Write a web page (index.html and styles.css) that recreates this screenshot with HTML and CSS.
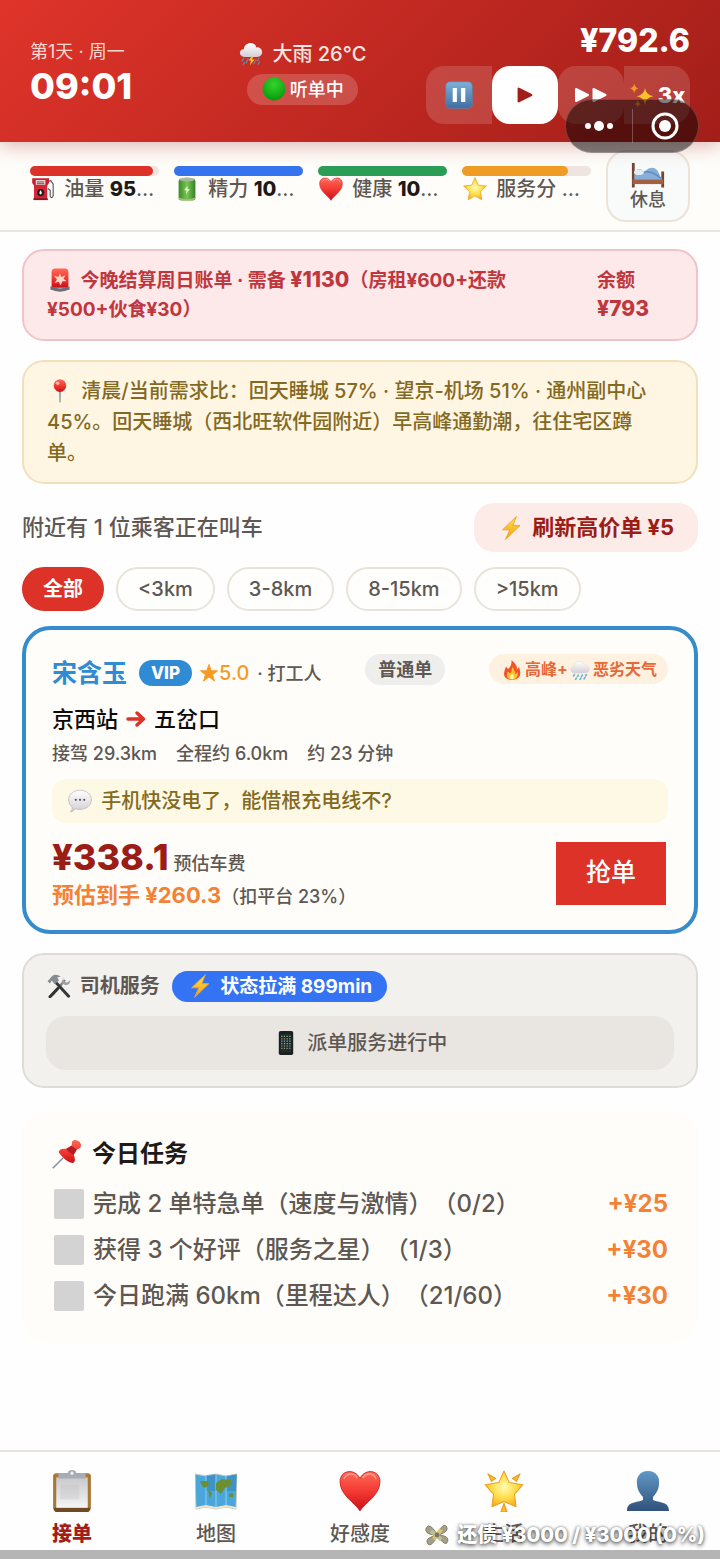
FILE: index.html
```html
<!DOCTYPE html>
<html lang="zh-CN">
<head>
<meta charset="utf-8">
<meta name="viewport" content="width=device-width, initial-scale=1">
<title>接单</title>
<link rel="stylesheet" href="styles.css">
</head>
<body>
<svg class="sprite" aria-hidden="true">
  <defs>
    <linearGradient id="g-red" x1="0" y1="0" x2="0" y2="1"><stop offset="0" stop-color="#ff6a58"/><stop offset=".5" stop-color="#f33a32"/><stop offset="1" stop-color="#c90f17"/></linearGradient>
    <radialGradient id="g-gold" cx=".5" cy=".45" r=".6"><stop offset="0" stop-color="#fffcb4"/><stop offset=".55" stop-color="#ffdc45"/><stop offset="1" stop-color="#f4a51c"/></radialGradient>
    <linearGradient id="g-cloud" x1="0" y1="0" x2="0" y2="1"><stop offset="0" stop-color="#fff"/><stop offset="1" stop-color="#d5cdd6"/></linearGradient>
    <linearGradient id="g-blue" x1="0" y1="0" x2="0" y2="1"><stop offset="0" stop-color="#7eb0d8"/><stop offset="1" stop-color="#3f6fa3"/></linearGradient>
    <linearGradient id="g-person" x1="0" y1="0" x2="0" y2="1"><stop offset="0" stop-color="#6098c6"/><stop offset="1" stop-color="#31527c"/></linearGradient>
    <linearGradient id="g-green" x1="0" y1="0" x2="1" y2="0"><stop offset="0" stop-color="#3b8a2c"/><stop offset=".5" stop-color="#7cc552"/><stop offset="1" stop-color="#35802a"/></linearGradient>
    <radialGradient id="g-dot" cx=".5" cy=".3" r=".7"><stop offset="0" stop-color="#35d52c"/><stop offset="1" stop-color="#069a0b"/></radialGradient>
    <linearGradient id="g-paper" x1="0" y1="0" x2="0" y2="1"><stop offset="0" stop-color="#c9c9cb"/><stop offset="1" stop-color="#f5f5f6"/></linearGradient>
    <linearGradient id="g-bolt" x1="0" y1="0" x2="0" y2="1"><stop offset="0" stop-color="#ffe34a"/><stop offset="1" stop-color="#f59d12"/></linearGradient>
  </defs>
  <symbol id="heart" viewBox="0 0 40 40"><path d="M20 39C15 31 1 24 1 11 1 0 15-2 20 8 25-2 39 0 39 11 39 24 25 31 20 39Z" fill="url(#g-red)" stroke="#c51d1d" stroke-width=".8"/><path d="M5 8C8 2 15 3 17 7M23 7C27 2 33 3 35 8" fill="none" stroke="#ffb0a2" stroke-width="1.5" stroke-linecap="round" opacity=".7"/></symbol>
  <symbol id="star" viewBox="0 0 40 40"><path d="M20 1 25.5 13.5 39 15 29 24.500 31.500 38 20 31.500 8.500 38 11 24.500 1 15 14.500 13.500Z" fill="url(#g-gold)" stroke="#e8a322" stroke-width="1.200" stroke-linejoin="round"/></symbol>
  <symbol id="glow-star" viewBox="0 0 40 40"><path d="M20 1 25 12 38 14 30 23 31.500 35 20 30 8.500 35 10 23 2 14 15 12Z" fill="url(#g-gold)" stroke="#e8a322" stroke-linejoin="round"/><path d="M5 4 12 8 8 11ZM35 4 28 8 32 11ZM17 40 20 32 23 40Z" fill="#f7bb2b" stroke="#e69b1c"/></symbol>
  <symbol id="flat-star" viewBox="0 0 40 40"><path d="M20 1 25 15H39L28 24 32 38 20 29 8 38 12 24 1 15H15Z" fill="#f59a23" stroke="#f59a23" stroke-width="2" stroke-linejoin="round"/></symbol>
  <symbol id="storm" viewBox="0 0 40 40"><path d="M10 25C-1 25-1 12 8 12 9 0 26-2 29 9 41 8 42 25 30 25Z" fill="url(#g-cloud)"/><path d="M8 27 5 32M15 28 12 35M33 27 31 31M28 30 25 36M9 34 7 38M34 33 32 37" stroke="#6f7c96" stroke-width="2.500" stroke-linecap="round"/><path d="M21 24 16 31H20L18 39 26 29H22L24 24Z" fill="#ffbd22"/></symbol>
  <symbol id="rain" viewBox="0 0 40 40"><path d="M10 26C-1 26-1 13 8 13 9 1 26-1 29 10 41 9 42 26 30 26Z" fill="url(#g-cloud)" stroke="#d9d7dc"/><path d="M9 29 7 32M17 30 15 33M25 30 23 33M33 29 31 32M13 36 11 39M22 36 20 39M30 35 28 38" stroke="#63b5da" stroke-width="3" stroke-linecap="round"/></symbol>
  <symbol id="green-dot" viewBox="0 0 40 40"><circle cx="20" cy="20" r="19" fill="url(#g-dot)"/></symbol>
  <symbol id="pause" viewBox="0 0 40 40"><rect x="1" y="1" width="38" height="38" rx="6" fill="url(#g-blue)" stroke="#5685b0"/><path d="M11 10h6v20h-6ZM23 10h6v20h-6Z" fill="#fff"/></symbol>
  <symbol id="play" viewBox="0 0 40 40"><path d="M6 6 34 20 6 34Z" fill="currentColor" stroke="currentColor" stroke-width="5" stroke-linejoin="round"/></symbol>
  <symbol id="forward" viewBox="0 0 68 40"><path d="M4 8 28 20 4 32ZM39 8 63 20 39 32Z" fill="currentColor" stroke="currentColor" stroke-width="4" stroke-linejoin="round"/></symbol>
  <symbol id="sparkle" viewBox="0 0 40 40"><path d="M25 8Q26 20 39 22 26 24 25 37 24 24 11 22 24 20 25 8Z" fill="#fbc12d"/><path d="M7 1Q8 8 14 9 8 10 7 17 6 10 0 9 6 8 7 1ZM13 29Q14 34 18 35 14 36 13 40 12 36 8 35 12 34 13 29Z" fill="#f49b29"/></symbol>
  <symbol id="fuel" viewBox="0 0 40 40"><path d="M28 8 33 6 37 12V31Q35 37 32 32V22L28 19" fill="none" stroke="#685d60" stroke-width="2"/><path d="M5 8H27V38H5Z" fill="#d42837"/><path d="M2 2H30V10L27 14H5L2 10Z" fill="#c9202f"/><path d="M8 5H24V13H8Z" fill="#eadadb"/><path d="M10 8H22M10 11H22" stroke="#a55d65" stroke-width="2"/><circle cx="16" cy="26" r="6" fill="#241d20"/><path d="M16 22Q20 28 16 29 12 28 16 22Z" fill="#fff"/><path d="M4 37H28" stroke="#851522" stroke-width="3"/></symbol>
  <symbol id="battery" viewBox="0 0 40 40"><rect x="6" y="3" width="28" height="36" rx="4" fill="url(#g-green)"/><ellipse cx="20" cy="4" rx="13" ry="3" fill="#a6b9a1"/><path d="M6 34Q20 40 34 34V37Q20 42 6 37Z" fill="#a8bb7a"/><path d="M21 14 15 22H19L18 29 25 20H21Z" fill="#d5f2bf"/></symbol>
  <symbol id="bed" viewBox="0 0 48 40"><path d="M3 3V38M45 15V38" stroke="#77452f" stroke-width="4"/><path d="M2 26H46V33H2Z" fill="#a26141"/><path d="M5 26V14Q14 8 18 16 29 5 37 13L44 26Z" fill="#87aed8"/><ellipse cx="11" cy="16" rx="7" ry="4" fill="#e4edf7"/><path d="M18 16Q30 13 42 25" fill="none" stroke="#5f8bc0" stroke-width="2"/></symbol>
  <symbol id="siren" viewBox="0 0 40 40"><path d="M6 33V7Q6 1 12 1H28Q34 1 34 7V33Z" fill="url(#g-red)"/><path d="M20 9 22 15 29 12 26 18 31 22 24 22 21 29 18 23 11 25 15 19 10 13 17 15Z" fill="#ffd5ca"/><path d="M4 31Q20 37 36 31V36Q20 43 4 36Z" fill="#697078"/></symbol>
  <symbol id="pin" viewBox="0 0 40 40"><path d="M18.500 18H21.500L21 39H19Z" fill="#8995a0"/><circle cx="20" cy="11" r="10.500" fill="url(#g-red)"/><circle cx="16" cy="7" r="3" fill="#ffaca3"/></symbol>
  <symbol id="bolt" viewBox="0 0 40 40"><path d="M29 1 6 23H18L11 39 35 16H23Z" fill="url(#g-bolt)" stroke="#eaa526" stroke-width="1.500" stroke-linejoin="round"/></symbol>
  <symbol id="fire" viewBox="0 0 40 40"><path d="M19 0Q33 12 29 20L34 14Q43 39 20 40-4 39 8 13L12 18Q20 12 19 0Z" fill="#f4512a"/><path d="M20 13Q28 25 27 29L31 24Q34 38 20 39 5 38 12 23L16 27Q21 21 20 13Z" fill="#ffc22c"/><path d="M20 27Q29 37 20 39 12 37 20 27Z" fill="#fff4a8"/></symbol>
  <symbol id="arrow" viewBox="0 0 40 40"><path d="M4 20H34M22 8 35 20 22 32" fill="none" stroke="#dc3228" stroke-width="7" stroke-linecap="round" stroke-linejoin="round"/></symbol>
  <symbol id="bubble" viewBox="0 0 40 40"><path d="M20 2C31 2 39 9 39 18S31 34 20 34Q15 34 12 33 9 38 4 38 8 34 7 30 1 26 1 18C1 9 9 2 20 2Z" fill="url(#g-cloud)" stroke="#aaa9ae"/><g fill="#555"><circle cx="13" cy="18" r="1.800"/><circle cx="20" cy="18" r="1.800"/><circle cx="27" cy="18" r="1.800"/></g></symbol>
  <symbol id="tools" viewBox="0 0 40 40"><path d="M30 10 9 35" stroke="#7f8588" stroke-width="4"/><path d="M27 5 30 1Q24 8 29 13 34 16 39 10 38 20 29 18L25 15Z" fill="#9ba1a4"/><path d="M13 12 36 37" stroke="#34373a" stroke-width="5" stroke-linecap="round"/><path d="M1 12 9 3Q15-1 23 4L17 6 20 11 13 17 8 11 5 16Z" fill="#858c90"/><path d="M18 24 5 38" stroke="#303234" stroke-width="5" stroke-linecap="round"/></symbol>
  <symbol id="phone" viewBox="0 0 40 40"><rect x="8" y="0" width="24" height="40" rx="3" fill="#1c2022"/><path d="M11 5H29V35H11Z" fill="#1d2e2c"/><g fill="none" stroke-width="2" stroke-dasharray="2 2.500"><path d="M12 9H29M12 21H29" stroke="#88b4a0"/><path d="M12 13H29M12 29H29" stroke="#b4915f"/><path d="M12 17H29M12 25H29" stroke="#9aa7b5"/></g></symbol>
  <symbol id="pushpin" viewBox="0 0 40 40"><path d="M15 25 1 39" stroke="#7d8e9c" stroke-width="2"/><path d="M27 3Q31-1 37 4 41 10 36 13L33 14 29 21Q33 31 27 32 19 31 9 18 9 12 19 13L26 9Z" fill="url(#g-red)"/><path d="M19 13Q22 19 29 21L33 14 26 9Z" fill="#b51c25"/></symbol>
  <symbol id="clipboard" viewBox="0 0 40 40"><rect x="2" y="3" width="36" height="36" rx="3" fill="#a97837"/><path d="M3 36H37V38Q37 40 34 40H6Q3 40 3 38Z" fill="#6e4a25"/><path d="M5 7H35V36H5Z" fill="url(#g-paper)"/><path d="M9 14H27V28H9Z" fill="#bfc0c2" opacity=".35"/><path d="M7 3H16Q16 0 20 0T24 3H33V8H7Z" fill="#a7adb5"/><circle cx="20" cy="3" r="1.500" fill="#eef2f4"/></symbol>
  <symbol id="map" viewBox="0 0 42 40"><path d="M0 3 11 5 21 3 31 5 42 3 41 38 31 36 21 38 11 36 1 38Z" fill="#4ba6dc" stroke="#c6c9ba"/><path d="M11 4 21 3V20H11ZM31 5 42 3 41 20H31Z" fill="#2777a9" opacity=".4"/><path d="M11 5V36M31 5V36M21 3V38" stroke="#8bd0f0" stroke-width="1"/><path d="M5 10 13 10 14 14 10 17 7 15ZM13 19 17 22 15 28ZM21 12 27 8 36 9 37 14 30 17 26 23 21 19ZM34 23 38 22 38 26 34 26Z" fill="#6d8f34"/><path d="M1 36 11 34 21 36 31 34 41 36V38L31 36 21 38 11 36 1 38Z" fill="#eee6d0"/></symbol>
  <symbol id="person" viewBox="0 0 42 40"><path d="M21 0C29 0 33 6 32 13 32 19 28 24 26 26V29C32 32 42 30 42 40H0C0 30 10 32 16 29V26C14 24 10 19 10 13 9 6 13 0 21 0Z" fill="url(#g-person)"/></symbol>
  <symbol id="money" viewBox="0 0 40 40"><path d="M20 18Q7-2 2 8T18 21Q-1 25 4 34T21 22Q35 41 38 31T23 20Q41 14 36 6T20 18Z" fill="#a49f85" stroke="#666351"/><path d="M12 11 29 25 25 30 8 16Z" fill="#bac09f"/><path d="M12 25 24 9 30 13 17 29Z" fill="#d9c66e"/><circle cx="20" cy="20" r="4" fill="#787761"/></symbol>
</svg>

<div class="app">
  <header class="topbar">
    <div class="clock"><span class="day">第1天 · 周一</span><strong class="time">09:01</strong></div>
    <div class="weather">
      <span class="weather-now"><svg class="emoji"><use href="#storm"/></svg> 大雨 26°C</span>
      <span class="status"><svg class="emoji"><use href="#green-dot"/></svg>听单中</span>
    </div>
    <div class="wallet">
      <strong class="balance">¥792.6</strong>
      <div class="speed">
        <button type="button" class="speed-btn first" aria-label="暂停"><svg class="ico28"><use href="#pause"/></svg></button>
        <button type="button" class="speed-btn active" aria-label="播放"><svg class="ico18"><use href="#play"/></svg></button>
        <button type="button" class="speed-btn" aria-label="快进"><svg class="ico-forward"><use href="#forward"/></svg></button>
        <button type="button" class="speed-btn last"><svg class="emoji"><use href="#sparkle"/></svg>3x</button>
      </div>
    </div>
    <div class="capsule">
      <button type="button" aria-label="更多"><svg class="ico-dots" viewBox="0 0 28 12" fill="#fff"><circle cx="3" cy="6" r="3"/><circle cx="14" cy="6" r="5"/><circle cx="25" cy="6" r="3"/></svg></button>
      <button type="button" aria-label="关闭"><svg class="ico28" viewBox="0 0 28 28"><circle cx="14" cy="14" r="12" fill="none" stroke="#fff" stroke-width="3"/><circle cx="14" cy="14" r="6" fill="#fff"/></svg></button>
    </div>
  </header>

  <section class="stats">
    <div class="stat"><div class="track"><div class="fill red" style="width:95%"></div></div><div class="stat-label"><svg class="emoji"><use href="#fuel"/></svg> 油量 <b>95</b>…</div></div>
    <div class="stat"><div class="track"><div class="fill blue" style="width:100%"></div></div><div class="stat-label"><svg class="emoji"><use href="#battery"/></svg> 精力 <b>10</b>…</div></div>
    <div class="stat"><div class="track"><div class="fill green" style="width:100%"></div></div><div class="stat-label"><svg class="emoji"><use href="#heart"/></svg> 健康 <b>10</b>…</div></div>
    <div class="stat"><div class="track"><div class="fill orange" style="width:82%"></div></div><div class="stat-label"><svg class="emoji"><use href="#star"/></svg> 服务分 …</div></div>
    <button type="button" class="rest"><svg class="ico-bed"><use href="#bed"/></svg>休息</button>
  </section>

  <main class="content">
    <section class="notice bill">
      <p><svg class="emoji"><use href="#siren"/></svg> 今晚结算周日账单 · 需备 <b>¥1130</b>（房租¥600+还款¥500+伙食¥30）</p>
      <p class="remain">余额<br><b>¥793</b></p>
    </section>
    <section class="notice demand">
      <p><svg class="emoji"><use href="#pin"/></svg> 清晨/当前需求比：回天睡城 57% · 望京-机场 51% · 通州副中心 45%。回天睡城（西北旺软件园附近）早高峰通勤潮，往住宅区蹲单。</p>
    </section>

    <div class="nearby"><span>附近有 1 位乘客正在叫车</span><button type="button" class="refresh"><svg class="emoji"><use href="#bolt"/></svg> 刷新高价单 ¥5</button></div>

    <div class="chips">
      <button type="button" class="chip on">全部</button>
      <button type="button" class="chip">&lt;3km</button>
      <button type="button" class="chip">3-8km</button>
      <button type="button" class="chip">8-15km</button>
      <button type="button" class="chip">&gt;15km</button>
    </div>

    <article class="order">
      <div class="order-head">
        <div class="who"><h2 class="name">宋含玉</h2><span class="vip">VIP</span><span class="rating"><svg class="ico18"><use href="#flat-star"/></svg>5.0</span><span class="job">· 打工人</span></div>
        <span class="kind">普通单</span>
        <span class="surge"><svg class="emoji"><use href="#fire"/></svg>高峰+<svg class="emoji"><use href="#rain"/></svg>恶劣天气</span>
      </div>
      <div class="route">京西站 <svg class="ico20"><use href="#arrow"/></svg> 五岔口</div>
      <div class="trip"><span>接驾 29.3km</span><span>全程约 6.0km</span><span>约 23 分钟</span></div>
      <div class="quote"><svg class="emoji"><use href="#bubble"/></svg> 手机快没电了，能借根充电线不?</div>
      <div class="order-foot">
        <div>
          <div class="fare"><strong>¥338.1</strong><span>预估车费</span></div>
          <div class="net"><strong>预估到手 ¥260.3</strong><span>（扣平台 23%）</span></div>
        </div>
        <button type="button" class="grab">抢单</button>
      </div>
    </article>

    <section class="service">
      <div class="service-head"><h3><svg class="emoji"><use href="#tools"/></svg> 司机服务</h3><span class="buff"><svg class="emoji"><use href="#bolt"/></svg> 状态拉满 899min</span></div>
      <button type="button" class="dispatch"><svg class="emoji"><use href="#phone"/></svg> 派单服务进行中</button>
    </section>

    <section class="tasks">
      <h3><svg class="ico30"><use href="#pushpin"/></svg>今日任务</h3>
      <div class="task"><input type="checkbox" id="t1"><label for="t1">完成 2 单特急单（速度与激情）（0/2）</label><b>+¥25</b></div>
      <div class="task"><input type="checkbox" id="t2"><label for="t2">获得 3 个好评（服务之星）（1/3）</label><b>+¥30</b></div>
      <div class="task"><input type="checkbox" id="t3"><label for="t3">今日跑满 60km（里程达人）（21/60）</label><b>+¥30</b></div>
    </section>
  </main>

  <nav class="tabs">
    <a href="#orders" class="tab current"><svg class="ico42"><use href="#clipboard"/></svg>接单</a>
    <a href="#map-page" class="tab"><svg class="ico42"><use href="#map"/></svg>地图</a>
    <a href="#favor" class="tab"><svg class="ico42"><use href="#heart"/></svg>好感度</a>
    <a href="#life" class="tab"><svg class="ico42"><use href="#glow-star"/></svg>生活</a>
    <a href="#me" class="tab"><svg class="ico42"><use href="#person"/></svg>我的</a>
    <div class="debt"><svg class="emoji"><use href="#money"/></svg> 还债 ¥3000 / ¥3000 (0%)</div>
  </nav>
</div>
</body>
</html>
```

FILE: styles.css
```css
* { box-sizing: border-box; }
body { margin: 0; background: #fefefe; color: #5e5752; font: 500 20px/1.5 Inter, "Noto Sans CJK SC", sans-serif; text-spacing-trim: space-all; }
h2, h3, p { margin: 0; }
button { margin: 0; padding: 0; border: 0; background: none; color: inherit; font: inherit; cursor: pointer; }
b, strong { font-weight: 800; }
.sprite { position: absolute; width: 0; height: 0; }
.emoji { width: 26px; height: 24px; margin-right: 3px; vertical-align: -5px; }
.ico18 { width: 18px; height: 18px; }
.ico20 { width: 20px; height: 20px; }
.ico28 { width: 28px; height: 28px; }
.ico30 { width: 30px; height: 30px; }
.ico42 { width: 42px; height: 42px; }
.ico-forward { width: 34px; height: 20px; }
.ico-dots { width: 28px; height: 12px; }
.ico-bed { width: 34px; height: 28px; }

.app { min-height: 100vh; display: flex; flex-direction: column; }

.topbar { position: relative; z-index: 1; display: grid; grid-template-columns: 3fr 5fr auto; padding: 24px 30px 18px; color: #fff; background: linear-gradient(135deg, #df342a, #a31e19); box-shadow: 0 4px 18px #a31e1950; }
.clock { display: flex; flex-direction: column; padding-top: 16px; }
.day { color: #fbd9d3; font-size: 18px; font-weight: 400; line-height: 24px; }
.time { font-size: 36px; line-height: 44px; }
.weather { display: flex; flex-direction: column; align-items: center; gap: 4px; padding-top: 14px; color: #fbe4df; }
.weather-now { line-height: 32px; }
.status { padding: 0 14px; border-radius: 16px; background: #ffffff2e; color: #fff; font-size: 18px; line-height: 31px; }
.wallet { display: flex; flex-direction: column; align-items: flex-end; gap: 8px; }
.balance { font-size: 32px; line-height: 34px; }
.speed { display: flex; }
.speed-btn { display: flex; align-items: center; justify-content: center; width: 66px; height: 58px; border-radius: 18px; background: #ffffff26; font-size: 22px; font-weight: 800; white-space: nowrap; }
.speed-btn.first { border-radius: 18px 0 0 18px; }
.speed-btn.last { border-radius: 0 18px 18px 0; }
.speed-btn.active { background: #fff; color: #a31e19; }
.capsule { position: absolute; top: 99px; right: 21px; display: flex; align-items: center; width: 134px; height: 54px; border: 1px solid #ffffff30; border-radius: 27px; background: #00000080; }
.capsule button { flex: 1; display: flex; align-items: center; justify-content: center; height: 34px; }
.capsule button + button { border-left: 1px solid #ffffff40; }

.stats { display: flex; gap: 15px; padding: 8px 30px; border-bottom: 2px solid #e8e4df; background: #fefdf9; }
.stat { flex: 1; min-width: 0; padding-top: 16px; }
.track { height: 10px; border-radius: 5px; background: #efe4df; }
.fill { height: 100%; border-radius: 5px; }
.fill.red { background: #dc3228; }
.fill.blue { background: #3574ee; }
.fill.green { background: #2a9d56; }
.fill.orange { background: #ef9c24; }
.stat-label { overflow: hidden; line-height: 26px; white-space: nowrap; }
.stat-label b { color: #1f1a17; }
.rest { display: flex; flex-direction: column; align-items: center; justify-content: center; width: 84px; height: 72px; border: 2px solid #ece4da; border-radius: 20px; background: #f8fbfa; font-size: 18px; line-height: 22px; }

.content { display: flex; flex-direction: column; padding: 17px 22px 24px; }
.notice { display: flex; gap: 30px; margin-bottom: 19px; border: 2px solid; border-radius: 22px; }
.bill { padding: 15px 47px 15px 23px; border-color: #f0c3c8; background: #fde8ea; color: #bf373d; font-size: 19px; font-weight: 700; line-height: 29px; }
.bill p:first-child { flex: 1; }
.bill b { font-size: 21px; line-height: 20px; }
.demand { padding: 14px 27px 13px 23px; border-color: #efe2bb; background: #fef5e3; color: #836921; line-height: 31px; }

.nearby { display: flex; align-items: center; justify-content: space-between; margin-bottom: 15px; font-size: 22px; }
.refresh { height: 49px; padding: 0 24px; border-radius: 20px; background: #fdebe7; color: #9c1c16; font-weight: 700; }

.chips { display: flex; gap: 12px; margin-bottom: 15px; }
.chip { height: 44px; padding: 0 20px; border: 2px solid #e8e4db; border-radius: 22px; background: #fefefc; line-height: 30px; }
.chip.on { padding: 0 19px; border-color: #dc3228; background: #dc3228; color: #fff; font-weight: 700; }

.order { margin-bottom: 19px; padding: 24px 26px 19px; border: 4px solid #368bcb; border-radius: 28px; background: #fefdf9; }
.order-head { display: flex; align-items: flex-start; justify-content: space-between; }
.who { display: flex; align-items: center; gap: 8px; height: 38px; }
.name { margin-right: 4px; color: #2f8bd3; font-size: 25px; font-weight: 700; line-height: 38px; }
.vip { padding: 0 12px; border-radius: 13px; background: #2f8bd3; color: #fff; font-size: 17px; font-weight: 800; line-height: 26px; }
.rating { display: flex; align-items: center; gap: 1px; color: #f59a23; }
.job { font-size: 18px; }
.kind { padding: 0 13px; border-radius: 16px; background: #eeefed; font-size: 18px; font-weight: 700; line-height: 31px; }
.surge { padding: 0 11px; border-radius: 16px; background: #fef1df; color: #e5683a; font-size: 16px; font-weight: 700; line-height: 30px; }
.surge .emoji { width: 24px; height: 20px; margin-right: 1px; }
.route { display: flex; align-items: center; gap: 8px; margin-top: 10px; color: #0d0b0a; font-size: 22px; line-height: 34px; }
.trip { display: flex; gap: 19px; margin-top: 4px; font-size: 18px; line-height: 28px; }
.quote { margin-top: 11px; padding: 0 15px; border-radius: 14px; background: #fef9e5; color: #836921; line-height: 44px; }
.order-foot { display: flex; align-items: center; justify-content: space-between; margin-top: 12px; padding-right: 2px; }
.fare { display: flex; align-items: baseline; gap: 5px; height: 44px; font-size: 18px; line-height: 44px; }
.fare strong { color: #9c1c16; font-size: 36px; }
.net { display: flex; align-items: baseline; height: 32px; font-size: 18px; line-height: 32px; }
.net strong { color: #f48236; font-size: 22px; font-weight: 700; }
.grab { width: 110px; height: 63px; background: #dc3228; color: #fff; font-size: 25px; }

.service { margin-bottom: 23px; padding: 16px 22px; border: 2px solid #dddcd6; border-radius: 22px; background: #f3f1ed; }
.service-head { display: flex; align-items: center; gap: 12px; margin-bottom: 14px; }
.service h3 { font-size: 20px; font-weight: 700; line-height: 31px; }
.buff { padding: 0 15px; border-radius: 16px; background: #3474f4; color: #fff; font-size: 19px; font-weight: 700; line-height: 31px; }
.dispatch { width: 100%; height: 54px; border-radius: 20px; background: #e9e5e1; }

.tasks { padding: 26px 30px 24px; border-radius: 26px; background: #fefdf9; }
.tasks h3 { display: flex; align-items: center; gap: 10px; margin-bottom: 10px; color: #1f1a17; font-size: 24px; font-weight: 700; line-height: 34px; }
.task { display: flex; align-items: center; gap: 9px; font-size: 24px; line-height: 46px; }
.task input { appearance: none; width: 30px; height: 30px; margin: 0 0 0 2px; border-radius: 2px; background: #d3d3d3; }
.task label { flex: 1; }
.task b { color: #f48236; font-weight: 700; }

.tabs { position: relative; display: grid; grid-template-columns: repeat(5, 1fr); margin-top: auto; padding-top: 18px; border-top: 2px solid #e8e4db; border-bottom: 9px solid #b5b5b5; background: #fefefe; }
.tab { display: flex; flex-direction: column; align-items: center; gap: 6px; color: inherit; line-height: 32px; text-decoration: none; }
.tab.current { color: #a31e19; font-weight: 800; }
.debt { position: absolute; right: 15px; bottom: 0; color: #fff; font-weight: 800; line-height: 30px; text-shadow: 0 2px 4px #0009, 0 0 3px #0007; }
```
